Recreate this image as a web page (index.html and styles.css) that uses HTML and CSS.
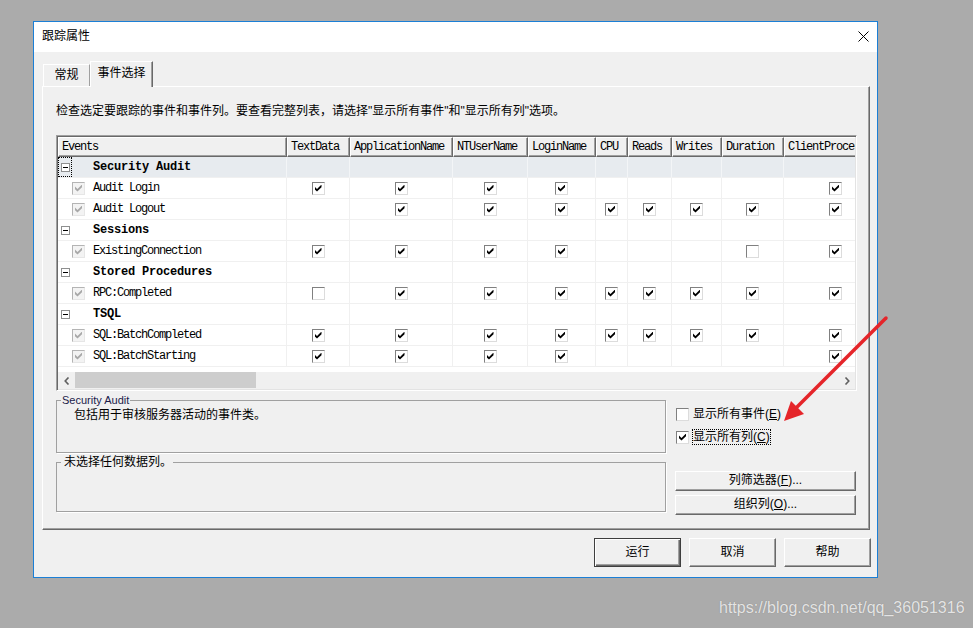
FILE: index.html
```html
<!DOCTYPE html>
<html lang="zh-CN">
<head>
<meta charset="utf-8">
<title>跟踪属性</title>
<link rel="stylesheet" href="styles.css">
</head>
<body>
<div class="dialog">
  <div class="titlebar">
    <span class="title">跟踪属性</span>
    <svg class="close" width="11" height="11" viewBox="0 0 11 11"><path d="M0.5 0.5L10.5 10.5M10.5 0.5L0.5 10.5" stroke="#000" stroke-width="1" fill="none"/></svg>
  </div>
  <div class="body">
    <div class="tabs">
      <div class="tab">常规</div>
      <div class="tab active">事件选择</div>
    </div>
    <div class="panel">
      <p class="desc">检查选定要跟踪的事件和事件列。要查看完整列表，请选择"显示所有事件"和"显示所有列"选项。</p>
      <div class="grid">
        <div class="viewport">
          <div class="row head">
            <div class="hc">Events</div><div class="hc">TextData</div><div class="hc">ApplicationName</div><div class="hc">NTUserName</div><div class="hc">LoginName</div><div class="hc">CPU</div><div class="hc">Reads</div><div class="hc">Writes</div><div class="hc">Duration</div><div class="hc">ClientProcessID</div>
          </div>
          <div class="row cat sel">
            <div class="c ev"><span class="exp focus"><span class="minus"></span></span><span class="cname">Security Audit</span></div>
            <div class="c"></div><div class="c"></div><div class="c"></div><div class="c"></div><div class="c"></div><div class="c"></div><div class="c"></div><div class="c"></div><div class="c"></div>
          </div>
          <div class="row">
            <div class="c ev"><span class="ck on dis ind"></span><span class="ename">Audit Login</span></div>
            <div class="c"><span class="ck on"></span></div><div class="c"><span class="ck on"></span></div><div class="c"><span class="ck on"></span></div><div class="c"><span class="ck on"></span></div><div class="c"></div><div class="c"></div><div class="c"></div><div class="c"></div><div class="c"><span class="ck on"></span></div>
          </div>
          <div class="row">
            <div class="c ev"><span class="ck on dis ind"></span><span class="ename">Audit Logout</span></div>
            <div class="c"></div><div class="c"><span class="ck on"></span></div><div class="c"><span class="ck on"></span></div><div class="c"><span class="ck on"></span></div><div class="c"><span class="ck on"></span></div><div class="c"><span class="ck on"></span></div><div class="c"><span class="ck on"></span></div><div class="c"><span class="ck on"></span></div><div class="c"><span class="ck on"></span></div>
          </div>
          <div class="row cat">
            <div class="c ev"><span class="exp"><span class="minus"></span></span><span class="cname">Sessions</span></div>
            <div class="c"></div><div class="c"></div><div class="c"></div><div class="c"></div><div class="c"></div><div class="c"></div><div class="c"></div><div class="c"></div><div class="c"></div>
          </div>
          <div class="row">
            <div class="c ev"><span class="ck on dis ind"></span><span class="ename">ExistingConnection</span></div>
            <div class="c"><span class="ck on"></span></div><div class="c"><span class="ck on"></span></div><div class="c"><span class="ck on"></span></div><div class="c"><span class="ck on"></span></div><div class="c"></div><div class="c"></div><div class="c"></div><div class="c"><span class="ck"></span></div><div class="c"><span class="ck on"></span></div>
          </div>
          <div class="row cat">
            <div class="c ev"><span class="exp"><span class="minus"></span></span><span class="cname">Stored Procedures</span></div>
            <div class="c"></div><div class="c"></div><div class="c"></div><div class="c"></div><div class="c"></div><div class="c"></div><div class="c"></div><div class="c"></div><div class="c"></div>
          </div>
          <div class="row">
            <div class="c ev"><span class="ck on dis ind"></span><span class="ename">RPC:Completed</span></div>
            <div class="c"><span class="ck"></span></div><div class="c"><span class="ck on"></span></div><div class="c"><span class="ck on"></span></div><div class="c"><span class="ck on"></span></div><div class="c"><span class="ck on"></span></div><div class="c"><span class="ck on"></span></div><div class="c"><span class="ck on"></span></div><div class="c"><span class="ck on"></span></div><div class="c"><span class="ck on"></span></div>
          </div>
          <div class="row cat">
            <div class="c ev"><span class="exp"><span class="minus"></span></span><span class="cname">TSQL</span></div>
            <div class="c"></div><div class="c"></div><div class="c"></div><div class="c"></div><div class="c"></div><div class="c"></div><div class="c"></div><div class="c"></div><div class="c"></div>
          </div>
          <div class="row">
            <div class="c ev"><span class="ck on dis ind"></span><span class="ename">SQL:BatchCompleted</span></div>
            <div class="c"><span class="ck on"></span></div><div class="c"><span class="ck on"></span></div><div class="c"><span class="ck on"></span></div><div class="c"><span class="ck on"></span></div><div class="c"><span class="ck on"></span></div><div class="c"><span class="ck on"></span></div><div class="c"><span class="ck on"></span></div><div class="c"><span class="ck on"></span></div><div class="c"><span class="ck on"></span></div>
          </div>
          <div class="row">
            <div class="c ev"><span class="ck on dis ind"></span><span class="ename">SQL:BatchStarting</span></div>
            <div class="c"><span class="ck on"></span></div><div class="c"><span class="ck on"></span></div><div class="c"><span class="ck on"></span></div><div class="c"><span class="ck on"></span></div><div class="c"></div><div class="c"></div><div class="c"></div><div class="c"></div><div class="c"><span class="ck on"></span></div>
          </div>
        </div>
        <div class="hscroll">
          <div class="sarrow"><svg width="6" height="8" viewBox="0 0 6 8"><path d="M4.5 0.5L1.2 4L4.5 7.5" stroke="#606060" stroke-width="1.6" fill="none"/></svg></div>
          <div class="thumb"></div>
          <div class="track"></div>
          <div class="sarrow"><svg width="6" height="8" viewBox="0 0 6 8"><path d="M1.5 0.5L4.8 4L1.5 7.5" stroke="#606060" stroke-width="1.6" fill="none"/></svg></div>
        </div>
      </div>
      <div class="lower">
        <div class="groups">
          <fieldset class="gb gb1"><legend class="lg1">Security Audit</legend><div class="gbc1">包括用于审核服务器活动的事件类。</div></fieldset>
          <fieldset class="gb gb2"><legend class="lg2">未选择任何数据列。</legend><div class="gbc2"></div></fieldset>
        </div>
        <div class="opts">
          <div class="opt"><span class="ck"></span><span class="lbl">显示所有事件(<u>E</u>)</span></div>
          <div class="opt opt2"><span class="ck on"></span><span class="lbl focus">显示所有列(<u>C</u>)</span></div>
          <div class="sbtn sbtn1">列筛选器(<u>F</u>)...</div>
          <div class="sbtn sbtn2">组织列(<u>O</u>)...</div>
        </div>
      </div>
    </div>
    <div class="buttons">
      <div class="btn default">运行</div>
      <div class="btn">取消</div>
      <div class="btn">帮助</div>
    </div>
  </div>
</div>
<svg class="arrow" width="973" height="628" viewBox="0 0 973 628">
  <line x1="886" y1="318" x2="796" y2="408" stroke="#e5252a" stroke-width="3.5" stroke-linecap="round"/>
  <polygon points="784,421 791,401 804,414" fill="#e5252a"/>
</svg>
<div class="watermark">https://blog.csdn.net/qq_36051316</div>
</body>
</html>
```
FILE: styles.css
```css
html, body {
  margin: 0;
  padding: 0;
}
body {
  width: 973px;
  height: 628px;
  overflow: hidden;
  background: #ababab;
  position: relative;
  font-family: "Liberation Sans", "Noto Sans CJK SC", sans-serif;
  font-size: 12px;
  color: #000;
}

.dialog {
  margin: 21px 0 0 33px;
  width: 845px;
  height: 557px;
  box-sizing: border-box;
  border: 1px solid #1b7fd6;
  background: #f0f0f0;
  display: flex;
  flex-direction: column;
}

.titlebar {
  height: 30px;
  flex: none;
  background: #fff;
  display: flex;
  align-items: center;
  justify-content: space-between;
  padding: 0 8px 2px 8px;
  box-sizing: border-box;
}
.title {
  line-height: 14px;
}
.close {
  display: block;
  margin-top: 1px;
}

.body {
  flex: 1;
  display: flex;
  flex-direction: column;
  padding: 9px 7px 0 8px;
}

.tabs {
  height: 25px;
  display: flex;
  align-items: flex-end;
  padding-left: 1px;
  flex: none;
}
.tab {
  box-sizing: border-box;
  width: 47px;
  height: 22px;
  border-top: 1px solid #fff;
  border-left: 1px solid #fff;
  border-right: 1px solid #a0a0a0;
  text-align: center;
  line-height: 20px;
  background: #f0f0f0;
}
.tab.active {
  width: 63px;
  height: 26px;
  margin-bottom: -1px;
  border-right: 1px solid #696969;
  box-shadow: inset -1px 0 0 #a0a0a0;
  line-height: 22px;
  padding-bottom: 2px;
  position: relative;
  z-index: 2;
}

.panel {
  height: 444px;
  flex: none;
  box-sizing: border-box;
  border-top: 1px solid #fff;
  border-left: 1px solid #fff;
  border-right: 1px solid #696969;
  border-bottom: 1px solid #696969;
  box-shadow: inset -1px -1px 0 #a0a0a0;
  padding: 16px 11px 0 13px;
}
.desc {
  margin: 0 0 16px 0;
  line-height: 16px;
  white-space: nowrap;
}

/* grid */
.grid {
  width: 801px;
  height: 256px;
  box-sizing: border-box;
  border: 1px solid;
  border-color: #a0a0a0 #fff #fff #a0a0a0;
  box-shadow: inset 1px 1px 0 #696969, inset -1px -1px 0 #e3e3e3;
  padding: 1px;
  display: flex;
  flex-direction: column;
  background: #fff;
  font-family: "Liberation Mono", "DejaVu Sans Mono", monospace;
  font-size: 12px;
  letter-spacing: -1.2px;
}
.viewport {
  flex: 1;
  overflow: hidden;
  background: #fff;
}
.row {
  display: grid;
  grid-template-columns: 229px 63px 103px 75px 68px 32px 44px 50px 62px 104px;
  width: 830px;
  height: 21px;
}
.row.head {
  height: 20px;
}
.hc {
  box-sizing: border-box;
  border: 1px solid;
  border-color: #fff #696969 #696969 #fff;
  box-shadow: inset -1px -1px 0 #a0a0a0;
  background: #f0f0f0;
  padding-left: 3px;
  line-height: 18px;
  white-space: nowrap;
  overflow: hidden;
}
.c {
  box-sizing: border-box;
  border-right: 1px solid #f0f0f0;
  border-bottom: 1px solid #f0f0f0;
  display: flex;
  align-items: center;
  justify-content: center;
  white-space: nowrap;
}
.c.ev {
  justify-content: flex-start;
}
.row.sel .c {
  background: #e7ebef;
  border-right-color: #f3f5f7;
}
.exp {
  width: 14px;
  height: 20px;
  box-sizing: border-box;
  display: flex;
  align-items: center;
  justify-content: center;
  flex: none;
}
.exp.focus {
  border: 1px dotted #000;
}
.minus {
  width: 9px;
  height: 9px;
  box-sizing: border-box;
  border: 1px solid #8e8f8f;
  background: #fff;
  display: flex;
  align-items: center;
  justify-content: center;
}
.minus::after {
  content: "";
  width: 5px;
  height: 1px;
  background: #000;
}
.cname {
  margin-left: 21px;
  font-weight: bold;
  letter-spacing: -0.2px;
}
.ename {
  margin-left: 8px;
}

/* checkboxes */
.ck {
  width: 13px;
  height: 13px;
  box-sizing: border-box;
  border: 1px solid;
  border-color: #808080 #dcdcdc #dcdcdc #808080;
  background: #fff;
  display: inline-flex;
  align-items: center;
  justify-content: center;
  flex: none;
}
.ck.on::after {
  content: "";
  width: 7px;
  height: 7px;
  background: #000;
  clip-path: polygon(0 2px, 2.5px 4.5px, 7px 0, 7px 2.8px, 2.5px 7px, 0 4.7px);
}
.ck.dis {
  border-color: #b4b4b4 #e6e6e6 #e6e6e6 #b4b4b4;
  background: #f3f3f3;
}
.ck.dis::after {
  background: #a8a8a8;
}
.ck.ind {
  margin-left: 14px;
}

/* scrollbar */
.hscroll {
  height: 17px;
  flex: none;
  display: flex;
  align-items: stretch;
  background: #f0f0f0;
}
.sarrow {
  width: 17px;
  display: flex;
  align-items: center;
  justify-content: center;
  flex: none;
}
.sarrow svg {
  display: block;
}
.thumb {
  width: 181px;
  flex: none;
  background: #cdcdcd;
  margin: 0 0 1px 0;
}
.track {
  flex: 1;
}

/* lower area */
.lower {
  display: flex;
  gap: 9px;
}
.groups {
  width: 610px;
  flex: none;
}
.gb {
  margin: 0;
  padding: 0 0 0 4px;
  border: 1px solid #a0a0a0;
  box-shadow: 1px 1px 0 #fff;
  min-inline-size: 0;
}
.gb1 {
  margin-top: 3px;
}
.gb2 {
  margin-top: 2px;
}
.lg1 {
  padding: 0 1px;
  font-size: 11px;
  line-height: 12px;
  color: #1b1b4a;
}
.lg2 {
  padding: 0 1px 0 3px;
  line-height: 14px;
}
.gbc1 {
  height: 44px;
  padding: 2px 0 0 13px;
  line-height: 14px;
}
.gbc2 {
  height: 42px;
}

.opts {
  width: 181px;
  flex: none;
  padding-top: 15px;
}
.opt {
  height: 16px;
  display: flex;
  align-items: center;
  padding-left: 1px;
}
.opt .ck {
  margin-right: 4px;
}
.opt2 {
  margin-top: 7px;
}
.lbl {
  line-height: 14px;
  border: 1px solid transparent;
  margin-left: -1px;
}
.lbl.focus {
  border: 1px dotted #000;
}
.sbtn {
  height: 20px;
  box-sizing: border-box;
  border: 1px solid;
  border-color: #fff #696969 #696969 #fff;
  box-shadow: inset -1px -1px 0 #a0a0a0;
  text-align: center;
  line-height: 17px;
}
.sbtn1 {
  margin-top: 26px;
}
.sbtn2 {
  margin-top: 4px;
}

/* dialog buttons */
.buttons {
  display: flex;
  justify-content: flex-end;
  gap: 8px;
  margin-top: 8px;
  margin-right: -1px;
}
.btn {
  width: 87px;
  height: 29px;
  box-sizing: border-box;
  border: 1px solid;
  border-color: #fff #696969 #696969 #fff;
  box-shadow: inset -1px -1px 0 #a0a0a0;
  text-align: center;
  line-height: 26px;
}
.btn.default {
  border: 1px solid #3f3f3f;
  box-shadow: inset 1px 1px 0 #fff, inset -1px -1px 0 #696969, inset -2px -2px 0 #a0a0a0;
}

/* overlays */
.arrow {
  position: absolute;
  left: 0;
  top: 0;
  pointer-events: none;
}
.watermark {
  position: absolute;
  left: 719px;
  top: 598px;
  font-family: "Liberation Sans", Arial, sans-serif;
  font-size: 16px;
  line-height: 20px;
  color: rgba(255, 255, 255, 0.78);
  text-shadow: 0 0 1px rgba(0, 0, 0, 0.25);
  white-space: nowrap;
}
```
